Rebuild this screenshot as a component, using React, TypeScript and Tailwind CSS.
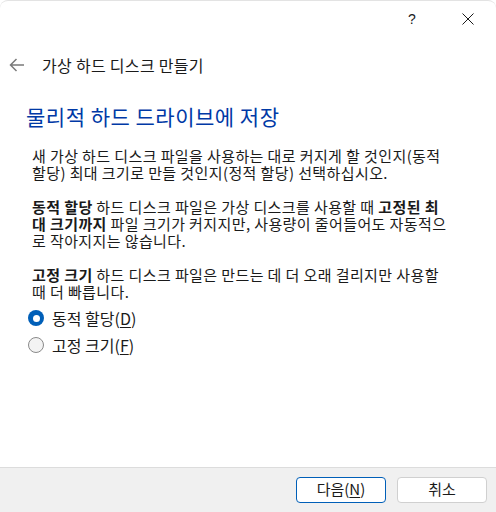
import * as React from "react";

const ko = { fontFamily: '"Noto Sans CJK KR", "Noto Sans", sans-serif' };

function Radio({ checked }: { checked: boolean }) {
  return checked ? (
    <span className="w-[16px] h-[16px] rounded-full bg-[#005fb8] flex items-center justify-center flex-none">
      <span className="w-[7px] h-[7px] rounded-full bg-white" />
    </span>
  ) : (
    <span className="w-[16px] h-[16px] rounded-full border border-[#8a8a8a] bg-[#f3f3f3] flex-none" />
  );
}

export default function App() {
  return (
    <div
      className="w-[496px] h-[512px] bg-white flex flex-col overflow-hidden rounded-t-[8px] border-t border-[#e3e3e3] text-[#1a1a1a]"
      style={ko}
    >
      <div className="h-[36px] flex items-center justify-end pr-[5px] text-[#1a1a1a]">
        <div
          className="w-[46px] h-[36px] flex items-center justify-center text-[14px] pl-[4px]"
          style={{ fontFamily: '"Liberation Sans", sans-serif' }}
        >
          ?
        </div>
        <div className="w-[12px]" />
        <div className="w-[46px] h-[36px] flex items-center justify-center">
          <svg width="12" height="12" viewBox="0 0 12 12">
            <path d="M0.5 0.5 L11.5 11.5 M11.5 0.5 L0.5 11.5" stroke="#1a1a1a" strokeWidth="1" fill="none" />
          </svg>
        </div>
      </div>

      <div className="flex-1 flex flex-col">
        <div className="mt-[17px] h-[22px] flex items-center">
          <div className="w-[42px] flex justify-start pl-[9px]">
            <svg width="16" height="14" viewBox="0 0 16 14">
              <path d="M15 7 H1.5 M7.5 1 L1.5 7 L7.5 13" stroke="#7a7a7a" strokeWidth="1.5" fill="none" />
            </svg>
          </div>
          <span className="text-[16px] leading-[22px] tracking-[0.3px]">가상 하드 디스크 만들기</span>
        </div>

        <div className="mt-[26px] pl-[26px] text-[21px] leading-[28px] tracking-[0.5px] text-[#0039a6]">
          물리적 하드 드라이브에 저장
        </div>

        <div className="mt-[17px] pl-[32px] text-[15px] leading-[17px] tracking-[0.4px] whitespace-nowrap flex flex-col gap-[17px]">
          <p>
            새 가상 하드 디스크 파일을 사용하는 대로 커지게 할 것인지(동적
            <br />
            할당) 최대 크기로 만들 것인지(정적 할당) 선택하십시오.
          </p>
          <p>
            <b>동적 할당</b> 하드 디스크 파일은 가상 디스크를 사용할 때 <b>고정된 최</b>
            <br />
            <b>대 크기까지</b> 파일 크기가 커지지만, 사용량이 줄어들어도 자동적으
            <br />로 작아지지는 않습니다.
          </p>
          <p>
            <b>고정 크기</b> 하드 디스크 파일은 만드는 데 더 오래 걸리지만 사용할
            <br />
            때 더 빠릅니다.
          </p>
        </div>

        <div className="mt-[6px] pl-[28px] flex flex-col gap-[3px] text-[16px]">
          <div className="h-[24px] flex items-center gap-[8px]">
            <Radio checked />
            <span>
              동적 할당(<span className="underline underline-offset-2">D</span>)
            </span>
          </div>
          <div className="h-[24px] flex items-center gap-[8px]">
            <Radio checked={false} />
            <span>
              고정 크기(<span className="underline underline-offset-2">F</span>)
            </span>
          </div>
        </div>
      </div>

      <div className="h-[45px] flex-none bg-[#f0f0f0] border-t border-[#dcdcdc] flex items-center justify-end gap-[11px] pr-[9px] pb-[1px]">
        <button className="w-[90px] h-[26px] rounded-[4px] bg-white border border-[#005fb8] text-[15px] text-[#1a1a1a]">
          다음(<span className="underline underline-offset-2">N</span>)
        </button>
        <button className="w-[90px] h-[26px] rounded-[4px] bg-white border border-[#d0d0d0] text-[15px] text-[#1a1a1a]">
          취소
        </button>
      </div>
    </div>
  );
}
